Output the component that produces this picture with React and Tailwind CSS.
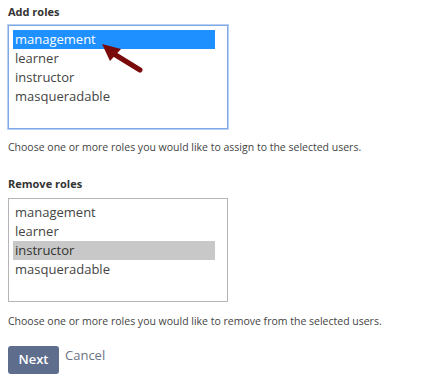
import React from "react";

const roles = ["management", "learner", "instructor", "masqueradable"];

const RoleList = ({ selected, focused, highlight }) => (
  <div
    className={`w-[220px] h-[104px] bg-white pt-[4px] pl-[4px] ${
      focused
        ? "border border-[#7fa8e6] shadow-[0_0_0_1px_#b9d0f4]"
        : "border border-[#b5b5b5]"
    }`}
  >
    {roles.map((role) => (
      <div
        key={role}
        className={`w-[202px] h-[19px] leading-[19px] pl-[2px] text-[13px] ${
          role === selected ? `${highlight} ` : "text-[#444]"
        }`}
      >
        {role}
      </div>
    ))}
  </div>
);

const App = () => {
  return (
    <div
      className="w-[421px] h-[386px] bg-white px-[8px] pt-[4px] text-[#333]"
      style={{ fontFamily: '"Open Sans", "Liberation Sans", sans-serif' }}
    >
      <div className="text-[11px] font-bold leading-[16px] mb-[5px]">Add roles</div>
      <div className="relative">
        <RoleList selected="management" focused highlight="bg-[#1e90ff] text-white" />
        {/* arrow annotation */}
        <svg
          className="absolute left-[88px] top-[12px]"
          width="50"
          height="40"
          viewBox="0 0 50 40"
        >
          <line x1="44" y1="33" x2="18" y2="17" stroke="#7a0a0a" strokeWidth="5" strokeLinecap="round" />
          <polygon points="6,7 25,12 14,24" fill="#7a0a0a" />
        </svg>
      </div>
      <p className="text-[10.5px] text-[#444] mt-[10px] leading-[16px]">
        Choose one or more roles you would like to assign to the selected users.
      </p>

      <div className="text-[11px] font-bold leading-[16px] mt-[21px] mb-[6px]">Remove roles</div>
      <RoleList selected="instructor" highlight="bg-[#c8c8c8] text-[#333]" />
      <p className="text-[10.5px] text-[#444] mt-[11px] leading-[16px]">
        Choose one or more roles you would like to remove from the selected users.
      </p>

      <div className="flex items-start gap-[6px] mt-[17px]">
        <button className="w-[51px] h-[28px] rounded-[3px] bg-[#5e6d8c] text-white text-[13px] font-semibold">
          Next
        </button>
        <a className="text-[13px] text-[#6b7385] leading-[16px] mt-[1px] cursor-pointer">Cancel</a>
      </div>
    </div>
  );
};

export default App;
